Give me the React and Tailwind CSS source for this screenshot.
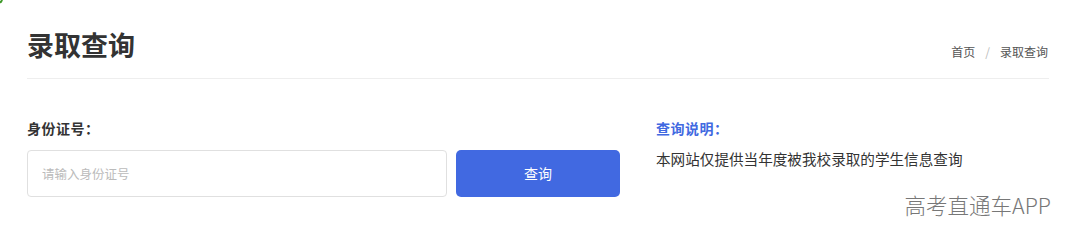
import React, { useState } from 'react';

const FONT = { fontFamily: '"Noto Sans CJK SC", "Noto Sans", sans-serif' };

export default function App() {
  const [idNo, setIdNo] = useState('');

  return (
    <div className="relative w-[1080px] h-[245px] bg-white overflow-hidden" style={FONT}>
      {/* corner artifact */}
      <div className="absolute left-0 top-0 w-[5px] h-[6px] rounded-br-[5px] border-r-2 border-b-2 border-[#3f9a2a] -translate-x-[2px] -translate-y-[2px]" />

      <div className="pl-[27px] pr-[31px]">
        {/* header */}
        <div className="flex items-end justify-between h-[79px] border-b border-[#eeeeee]">
          <h1 className="text-[27px] font-bold text-[#333] leading-none mb-[20px]">录取查询</h1>
          <div className="flex items-center text-[12px] text-[#555] mb-[17px] mr-[1px]">
            <span>首页</span>
            <span className="mx-[10px] text-[#bbb]">/</span>
            <span>录取查询</span>
          </div>
        </div>

        {/* body */}
        <div className="flex mt-[38px]">
          <div className="w-[593px]">
            <label className="block text-[14px] font-bold text-[#333] leading-[22px] tracking-[0.5px]">身份证号：</label>
            <div className="flex gap-[9px] mt-[11px]">
              <input
                value={idNo}
                onChange={e => setIdNo(e.target.value)}
                placeholder="请输入身份证号"
                className="w-[420px] h-[47px] border border-[#e0e0e0] rounded-[4px] px-[14px] text-[12.5px] text-[#333] placeholder:text-[#bbb] outline-none"
                style={FONT}
              />
              <button className="w-[164px] h-[47px] rounded-[5px] bg-[#4169e1] text-white text-[14px]">
                查询
              </button>
            </div>
          </div>

          <div className="ml-[36px]">
            <div className="text-[14px] font-bold text-[#4169e1] leading-[22px] tracking-[0.5px]">查询说明：</div>
            <p className="mt-[10px] text-[14.6px] text-[#333] leading-[20px]">本网站仅提供当年度被我校录取的学生信息查询</p>
          </div>
        </div>
      </div>

      {/* watermark */}
      <div className="absolute right-[29px] top-[191px] text-[21.5px] text-[#777] font-light leading-[28px]">
        高考直通车APP
      </div>
    </div>
  );
}
